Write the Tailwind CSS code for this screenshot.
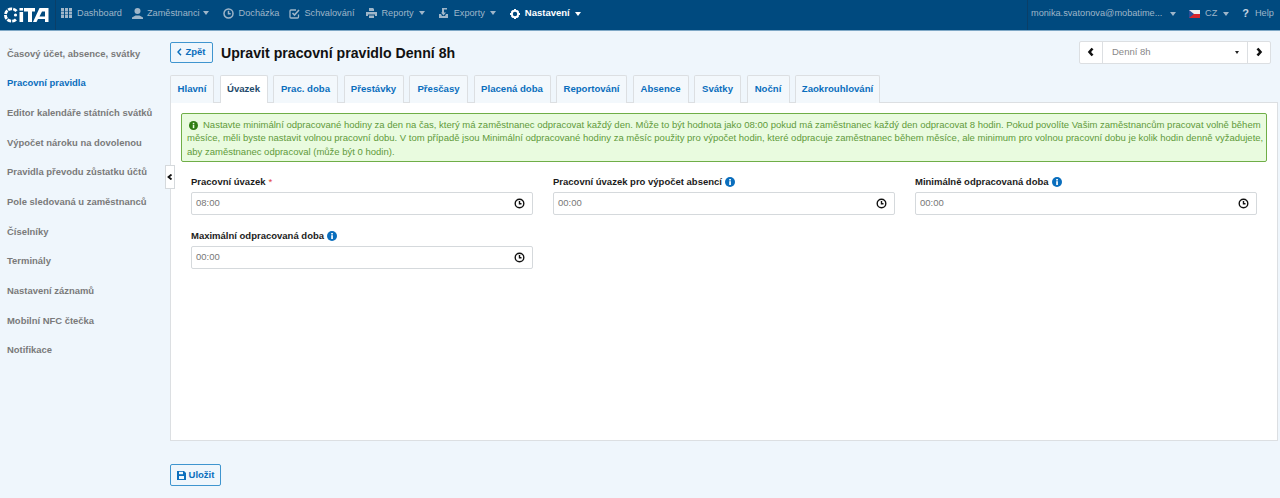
<!DOCTYPE html>
<html lang="cs">
<head>
  <meta charset="utf-8" />
  <title>Upravit pracovní pravidlo</title>
  <script src="https://cdn.jsdelivr.net/npm/@tailwindcss/browser@4"></script>
  <meta name="viewport" content="width=device-width,initial-scale=1" />
</head>
<body class="h-[498px] overflow-hidden bg-[#eff6fc] font-['Liberation_Sans',Arial,sans-serif] text-[9.5px] text-[#222]">

  <!-- top bar -->
  <header class="h-[31px] bg-[#004a7f] border-b border-[#7fa8c6] flex items-center text-[#9fb6c9] text-[9.200px] whitespace-nowrap">
    <div class="w-[56px] h-[30px] flex items-center pl-[4px] pb-[1px] border-r border-[#0a3f68] shrink-0">
      <svg width="45" height="16" viewBox="0 0 45 16">
        <path d="M12.500 4.200A6.200 6.200 0 1 0 12.500 11.800" fill="none" stroke="#fff" stroke-width="2.800" stroke-dasharray="4 1"/>
        <circle cx="11.500" cy="8" r="1.600" fill="#fff"/>
        <rect x="15.500" y="1" width="3.600" height="2.600" fill="#fff"/>
        <rect x="15.500" y="5" width="3.600" height="10" fill="#fff"/>
        <path d="M20 1H31V4.600H28V15H24V4.600H20Z" fill="#fff"/>
        <path d="M29 15L35.500 1H44.500V15H41V12H34L32.500 15ZM35.500 9.400H41V4.500H38Z" fill="#fff"/>
      </svg>
    </div>
    <nav class="flex items-center pl-[5px] pb-[3px]">
      <span class="flex items-center gap-[5px] mr-[10px]">
        <svg width="11" height="10" viewBox="0 0 11 10" fill="#9fb6c9"><path d="M0 0h3v3H0zM4 0h3v3H4zM8 0h3v3H8zM0 3.500h3v3H0zM4 3.500h3v3H4zM8 3.500h3v3H8zM0 7h3v3H0zM4 7h3v3H4zM8 7h3v3H8z"/></svg>
        Dashboard
      </span>
      <span class="flex items-center gap-[4px] mr-[14px]">
        <svg width="11" height="11" viewBox="0 0 11 11" fill="#9fb6c9"><circle cx="5.500" cy="3" r="3"/><path d="M0 11V9.500L3.500 7.500h4L11 9.500V11z"/></svg>
        Zaměstnanci
        <i class="w-0 h-0 border-x-[3.500px] border-x-transparent border-t-[4px] border-t-[#9fb6c9] -ml-[1px]"></i>
      </span>
      <span class="flex items-center gap-[5px] mr-[10px]">
        <svg width="11" height="11" viewBox="0 0 11 11" fill="none" stroke="#9fb6c9" stroke-width="1.500"><circle cx="5.500" cy="5.500" r="4.500"/><path d="M5.500 2.800v3h2.200"/></svg>
        Docházka
      </span>
      <span class="flex items-center gap-[4px] mr-[12px]">
        <svg width="11" height="11" viewBox="0 0 11 11" fill="none" stroke="#9fb6c9" stroke-width="1.300"><path d="M9.500 6.500V9a1 1 0 0 1-1 1H2a1 1 0 0 1-1-1V3a1 1 0 0 1 1-1h5"/><path d="M3.500 5l2 2 4.500-5" stroke-width="1.600"/></svg>
        Schvalování
      </span>
      <span class="flex items-center gap-[4px] mr-[13px]">
        <svg width="11" height="10" viewBox="0 0 11 10" fill="#9fb6c9"><path d="M3 0h4l1 1v2H3zM0 4h11v4H9V6.500H2V8H0zM3 7.500h5V10H3z"/></svg>
        Reporty
        <i class="w-0 h-0 border-x-[3.500px] border-x-transparent border-t-[4px] border-t-[#9fb6c9] ml-[1px]"></i>
      </span>
      <span class="flex items-center gap-[5px] mr-[14px]">
        <svg width="11" height="11" viewBox="0 0 11 11" fill="#9fb6c9"><path d="M4 0h5v1.500H6v3h2L5.500 7.500 3 4.500h1zM1 6h2l1 2h3l1-2h2v4H1z"/></svg>
        Exporty
        <i class="w-0 h-0 border-x-[3.500px] border-x-transparent border-t-[4px] border-t-[#9fb6c9]"></i>
      </span>
      <span class="flex items-center gap-[5px] text-white font-bold text-[9.500px]">
        <svg width="10" height="10" viewBox="0 0 10 10"><circle cx="5" cy="5" r="3.200" fill="none" stroke="#fff" stroke-width="2"/><path d="M4 0h2v2H4zM4 8h2v2H4zM0 4h2v2H0zM8 4h2v2H8zM1 2.400L2.400 1l1 1L2 3.400zM7.600 9L9 7.600l-1-1L6.600 8zM1 7.600L2.400 9l1-1L2 6.600zM7.600 1L9 2.400l-1 1L6.600 2z" fill="#fff"/></svg>
        Nastavení
        <i class="w-0 h-0 border-x-[3.500px] border-x-transparent border-t-[4px] border-t-white"></i>
      </span>
    </nav>
    <div class="ml-auto w-[253px] h-[30px] pl-[3px] pb-[3px] border-l border-[#0a3f68] flex items-center">
      <span class="w-[130px]">monika.svatonova@mobatime...</span>
      <i class="w-0 h-0 border-x-[3.500px] border-x-transparent border-t-[4px] border-t-[#9fb6c9] ml-[9px]"></i>
      <svg class="ml-[13px]" width="11" height="8" viewBox="0 0 11 8"><path d="M0 0h11v4H0z" fill="#eee"/><path d="M0 4h11v4H0z" fill="#d8232a"/><path d="M0 0l5 4-5 4z" fill="#2a4f9a"/></svg>
      <span class="ml-[5px]">CZ</span>
      <i class="w-0 h-0 border-x-[3px] border-x-transparent border-t-[4px] border-t-[#9fb6c9] ml-[6px]"></i>
      <span class="ml-[13px] text-[11px] font-bold text-[#c5d5e2]">?</span>
      <span class="ml-[6px]">Help</span>
    </div>
  </header>

  <div class="relative flex">
    <!-- side menu -->
    <aside class="w-[170px] shrink-0 pt-[8px] pl-[7px] text-[#7a7a7a] font-bold text-[9.450px] whitespace-nowrap">
      <ul class="flex flex-col">
        <li class="h-[29.650px] flex items-center">Časový účet, absence, svátky</li>
        <li class="h-[29.650px] flex items-center text-[#0a6ebd]">Pracovní pravidla</li>
        <li class="h-[29.650px] flex items-center">Editor kalendáře státních svátků</li>
        <li class="h-[29.650px] flex items-center">Výpočet nároku na dovolenou</li>
        <li class="h-[29.650px] flex items-center">Pravidla převodu zůstatku účtů</li>
        <li class="h-[29.650px] flex items-center">Pole sledovaná u zaměstnanců</li>
        <li class="h-[29.650px] flex items-center">Číselníky</li>
        <li class="h-[29.650px] flex items-center">Terminály</li>
        <li class="h-[29.650px] flex items-center">Nastavení záznamů</li>
        <li class="h-[29.650px] flex items-center">Mobilní NFC čtečka</li>
        <li class="h-[29.650px] flex items-center">Notifikace</li>
      </ul>
    </aside>

    <!-- sidebar collapse handle -->
    <button class="absolute left-[165px] top-[134px] w-[10px] h-[24px] bg-white border border-[#d5d9dc] flex items-center justify-center">
      <svg width="6" height="6" viewBox="0 0 6 6"><path d="M4.500.5L1.500 3l3 2.500" fill="none" stroke="#111" stroke-width="1.800"/></svg>
    </button>

    <main class="flex-1 pr-[2px] pt-[10px]">
      <!-- title row -->
      <div class="h-[22px] flex items-center">
        <button class="w-[43px] h-[21px] rounded-[2px] border border-[#3f95cf] bg-[#eff6fc] text-[#0a6ebd] font-bold flex items-center justify-center gap-[3px]">
          <svg width="5" height="8" viewBox="0 0 5 8"><path d="M4 .8L1 4l3 3.200" fill="none" stroke="#0a6ebd" stroke-width="1.400"/></svg>
          Zpět
        </button>
        <h1 class="ml-[8px] mt-[3px] text-[14.150px] font-bold text-[#111]">Upravit pracovní pravidlo Denní 8h</h1>

        <div class="ml-auto mr-[7px] w-[192px] h-[23px] bg-white border border-[#dcdfe2] rounded-[2px] flex items-center">
          <span class="w-[23px] h-full flex items-center justify-center border-r border-[#dcdfe2]">
            <svg width="8" height="10" viewBox="0 0 8 10"><path d="M5.500 1.500L2.500 5l3 3.500" fill="none" stroke="#111" stroke-width="2.600"/></svg>
          </span>
          <span class="flex-1 pl-[9px] text-[#888]">Denní 8h</span>
          <i class="w-0 h-0 border-x-[2.500px] border-x-transparent border-t-[3.500px] border-t-[#222] mr-[8px]"></i>
          <span class="w-[23px] h-full flex items-center justify-center border-l border-[#dcdfe2]">
            <svg width="8" height="10" viewBox="0 0 8 10"><path d="M2.500 1.500l3 3.500-3 3.500" fill="none" stroke="#111" stroke-width="2.600"/></svg>
          </span>
        </div>
      </div>

      <!-- tabs -->
      <div class="mt-[12px] h-[28px] flex gap-[5.500px] text-[#0a6ebd] font-bold text-[9.600px] relative z-10">
        <a class="w-[44px] h-[28px] bg-[#f3f8fc] border border-[#dcdfe2] border-b-0 rounded-t-[2px] flex items-center justify-center">Hlavní</a>
        <a class="w-[48px] h-[28px] bg-white border border-[#dcdfe2] border-b-0 rounded-t-[2px] flex items-center justify-center text-[#1f4a6b]">Úvazek</a>
        <a class="w-[65px] h-[28px] bg-[#f3f8fc] border border-[#dcdfe2] border-b-0 rounded-t-[2px] flex items-center justify-center">Prac. doba</a>
        <a class="w-[60px] h-[28px] bg-[#f3f8fc] border border-[#dcdfe2] border-b-0 rounded-t-[2px] flex items-center justify-center">Přestávky</a>
        <a class="w-[59px] h-[28px] bg-[#f3f8fc] border border-[#dcdfe2] border-b-0 rounded-t-[2px] flex items-center justify-center">Přesčasy</a>
        <a class="w-[77px] h-[28px] bg-[#f3f8fc] border border-[#dcdfe2] border-b-0 rounded-t-[2px] flex items-center justify-center">Placená doba</a>
        <a class="w-[71px] h-[28px] bg-[#f3f8fc] border border-[#dcdfe2] border-b-0 rounded-t-[2px] flex items-center justify-center">Reportování</a>
        <a class="w-[56px] h-[28px] bg-[#f3f8fc] border border-[#dcdfe2] border-b-0 rounded-t-[2px] flex items-center justify-center">Absence</a>
        <a class="w-[47px] h-[28px] bg-[#f3f8fc] border border-[#dcdfe2] border-b-0 rounded-t-[2px] flex items-center justify-center">Svátky</a>
        <a class="w-[43px] h-[28px] bg-[#f3f8fc] border border-[#dcdfe2] border-b-0 rounded-t-[2px] flex items-center justify-center">Noční</a>
        <a class="w-[85px] h-[28px] bg-[#f3f8fc] border border-[#dcdfe2] border-b-0 rounded-t-[2px] flex items-center justify-center">Zaokrouhlování</a>
      </div>

      <!-- tab panel -->
      <section class="h-[339px] -mt-px bg-white border border-[#dcdfe2] pt-[10px] px-[10px]">
        <div class="h-[49px] bg-[#e9fbdf] border border-[#6fae47] rounded-[2px] pl-[5px] pr-[1px] pt-[4px] text-[#5f9a3a] leading-[13.300px]">
          <svg class="inline-block align-[-2px] ml-[2px] mr-[5px]" width="9" height="9" viewBox="0 0 10 10"><circle cx="5" cy="5" r="5" fill="#2f7d12"/><rect x="4.200" y="4.200" width="1.700" height="3.800" fill="#e9fbdf"/><rect x="4.200" y="2" width="1.700" height="1.500" fill="#e9fbdf"/></svg>Nastavte minimální odpracované hodiny za den na čas, který má zaměstnanec odpracovat každý den. Může to být hodnota jako 08:00 pokud má zaměstnanec každý den odpracovat 8 hodin. Pokud povolíte Vašim zaměstnancům pracovat volně během měsíce, měli byste nastavit volnou pracovní dobu. V tom případě jsou Minimální odpracované hodiny za měsíc použity pro výpočet hodin, které odpracuje zaměstnanec během měsíce, ale minimum pro volnou pracovní dobu je kolik hodin denně vyžadujete, aby zaměstnanec odpracoval (může být 0 hodin).
        </div>

        <div class="mt-[12px] ml-[10px] w-[1066px] grid grid-cols-3 gap-x-[20px] gap-y-[13px]">
          <div>
            <label class="h-[16px] flex items-center gap-[3px] font-bold text-[#1b1b1b]">Pracovní úvazek <span class="text-[#e23b3b] font-normal">*</span></label>
            <div class="mt-[2px] h-[23px] bg-white border border-[#d5d9dc] rounded-[2px] flex items-center justify-between pl-[4px] pr-[7px] text-[#777]">
              08:00
              <svg width="11" height="11" viewBox="0 0 11 11" fill="none" stroke="#111" stroke-width="1.400"><circle cx="5.500" cy="5.500" r="4.300"/><path d="M5.500 3V5.700H7.500"/></svg>
            </div>
          </div>
          <div>
            <label class="h-[16px] flex items-center gap-[3px] font-bold text-[#1b1b1b]">Pracovní úvazek pro výpočet absencí
              <svg width="10" height="10" viewBox="0 0 10 10"><circle cx="5" cy="5" r="5" fill="#0a6ebd"/><rect x="4.200" y="4.200" width="1.700" height="3.800" fill="#fff"/><rect x="4.200" y="2" width="1.700" height="1.500" fill="#fff"/></svg>
            </label>
            <div class="mt-[2px] h-[23px] bg-white border border-[#d5d9dc] rounded-[2px] flex items-center justify-between pl-[4px] pr-[7px] text-[#777]">
              00:00
              <svg width="11" height="11" viewBox="0 0 11 11" fill="none" stroke="#111" stroke-width="1.400"><circle cx="5.500" cy="5.500" r="4.300"/><path d="M5.500 3V5.700H7.500"/></svg>
            </div>
          </div>
          <div>
            <label class="h-[16px] flex items-center gap-[3px] font-bold text-[#1b1b1b]">Minimálně odpracovaná doba
              <svg width="10" height="10" viewBox="0 0 10 10"><circle cx="5" cy="5" r="5" fill="#0a6ebd"/><rect x="4.200" y="4.200" width="1.700" height="3.800" fill="#fff"/><rect x="4.200" y="2" width="1.700" height="1.500" fill="#fff"/></svg>
            </label>
            <div class="mt-[2px] h-[23px] bg-white border border-[#d5d9dc] rounded-[2px] flex items-center justify-between pl-[4px] pr-[7px] text-[#777]">
              00:00
              <svg width="11" height="11" viewBox="0 0 11 11" fill="none" stroke="#111" stroke-width="1.400"><circle cx="5.500" cy="5.500" r="4.300"/><path d="M5.500 3V5.700H7.500"/></svg>
            </div>
          </div>
          <div>
            <label class="h-[16px] flex items-center gap-[3px] font-bold text-[#1b1b1b]">Maximální odpracovaná doba
              <svg width="10" height="10" viewBox="0 0 10 10"><circle cx="5" cy="5" r="5" fill="#0a6ebd"/><rect x="4.200" y="4.200" width="1.700" height="3.800" fill="#fff"/><rect x="4.200" y="2" width="1.700" height="1.500" fill="#fff"/></svg>
            </label>
            <div class="mt-[2px] h-[23px] bg-white border border-[#d5d9dc] rounded-[2px] flex items-center justify-between pl-[4px] pr-[7px] text-[#777]">
              00:00
              <svg width="11" height="11" viewBox="0 0 11 11" fill="none" stroke="#111" stroke-width="1.400"><circle cx="5.500" cy="5.500" r="4.300"/><path d="M5.500 3V5.700H7.500"/></svg>
            </div>
          </div>
        </div>
      </section>

      <button class="mt-[23px] w-[51px] h-[22px] rounded-[2px] border border-[#3f95cf] bg-[#eff6fc] text-[#0a6ebd] font-bold flex items-center justify-center gap-[3px]">
        <svg width="9" height="9" viewBox="0 0 9 9"><path d="M0 0h7l2 2v7H0z" fill="#0a6ebd"/><rect x="2" y="0.800" width="4" height="2.400" fill="#eff6fc"/><rect x="2" y="5" width="5" height="3" fill="#eff6fc"/></svg>
        Uložit
      </button>
    </main>
  </div>
</body>
</html>
